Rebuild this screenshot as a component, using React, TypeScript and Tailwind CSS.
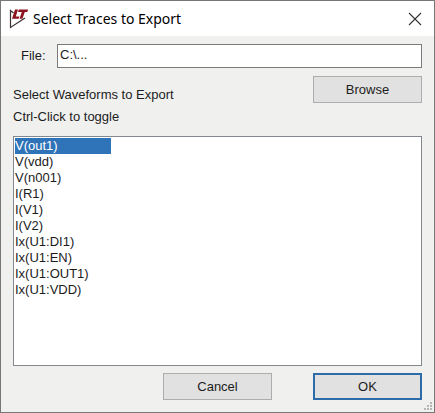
import { useState } from "react"

const traces = [
  "V(out1)",
  "V(vdd)",
  "V(n001)",
  "I(R1)",
  "I(V1)",
  "I(V2)",
  "Ix(U1:DI1)",
  "Ix(U1:EN)",
  "Ix(U1:OUT1)",
  "Ix(U1:VDD)",
]

function AppLogo() {
  return (
    <svg width="20" height="20" viewBox="0 0 20 20" fill="none" aria-hidden="true">
      <path d="M4.5 4L1.5 1.5v17L16 9" stroke="#3a3032" strokeWidth="1.2" />
      <path d="M6 .5h3L6.8 7.6h3.6l-.8 2.2H3z" fill="#8c1420" />
      <path d="M9.8 .5h9.4l-1 2.6h-2.4L13.4 9.8h-2.9l2.3-6.7H9z" fill="#8c1420" />
    </svg>
  )
}

function SizeGrip() {
  return (
    <svg width="9" height="9" viewBox="0 0 9 9" fill="#b5b5b5" aria-hidden="true">
      <path d="M6 0h2v2H6zM3 3h2v2H3zM6 3h2v2H6zM0 6h2v2H0zM3 6h2v2H3zM6 6h2v2H6z" />
    </svg>
  )
}

export default function App() {
  const [file, setFile] = useState("C:\\...")
  const [selected, setSelected] = useState<string[]>(["V(out1)"])

  return (
    <div className="relative flex min-h-screen flex-col border border-[#777777] bg-[#f0f0ef] font-['Liberation_Sans',Arial,sans-serif] text-[13px] text-[#1c1c1c]">
      <header className="flex h-[35px] items-center bg-white pr-3 pl-2">
        <AppLogo />
        <h1 className="ml-1 flex-1 font-['Noto_Sans','Open_Sans',sans-serif] text-sm text-black">
          Select Traces to Export
        </h1>
        <button type="button" aria-label="Close">
          <svg width="14" height="14" viewBox="0 0 14 14" stroke="#333333" strokeWidth="1.1">
            <path d="M1 1l12 12M13 1L1 13" />
          </svg>
        </button>
      </header>

      <main className="flex flex-1 flex-col px-3 pt-2 pb-3">
        <div className="flex items-center">
          <label htmlFor="file" className="w-11 pl-2">
            File:
          </label>
          <input
            id="file"
            type="text"
            value={file}
            onChange={(e) => setFile(e.target.value)}
            className="h-6 min-w-0 flex-1 border border-[#7a7a7a] bg-white px-[2px] pb-1 outline-none"
          />
        </div>

        <div className="mt-2 flex items-start justify-between">
          <label htmlFor="traces" className="pt-2 leading-[22px]">
            Select Waveforms to Export
            <br />
            Ctrl-Click to toggle
          </label>
          <button type="button" className="h-[27px] w-[109px] border border-[#adadad] bg-[#e1e1e1]">
            Browse
          </button>
        </div>

        <select
          id="traces"
          multiple
          value={selected}
          onChange={(e) => setSelected(Array.from(e.target.selectedOptions, (o) => o.value))}
          className="mt-2 min-h-[229px] flex-1 overflow-hidden border border-[#828790] bg-white p-px outline-none"
        >
          {traces.map((trace) => (
            <option
              key={trace}
              value={trace}
              className="h-4 min-h-4 w-24 p-0 text-[13px] leading-4 checked:bg-[linear-gradient(#2f73b9,#2f73b9)] checked:[-webkit-text-fill-color:#ffffff]"
            >
              {trace}
            </option>
          ))}
        </select>

        <div className="mt-[7px] flex justify-end gap-[41px]">
          <button type="button" className="h-[27px] w-[109px] border border-[#adadad] bg-[#e1e1e1]">
            Cancel
          </button>
          <button type="button" className="h-[27px] w-[109px] border-2 border-[#2d6ca8] bg-[#e1e1e1]">
            OK
          </button>
        </div>
      </main>

      <div className="absolute right-px bottom-px">
        <SizeGrip />
      </div>
    </div>
  )
}
